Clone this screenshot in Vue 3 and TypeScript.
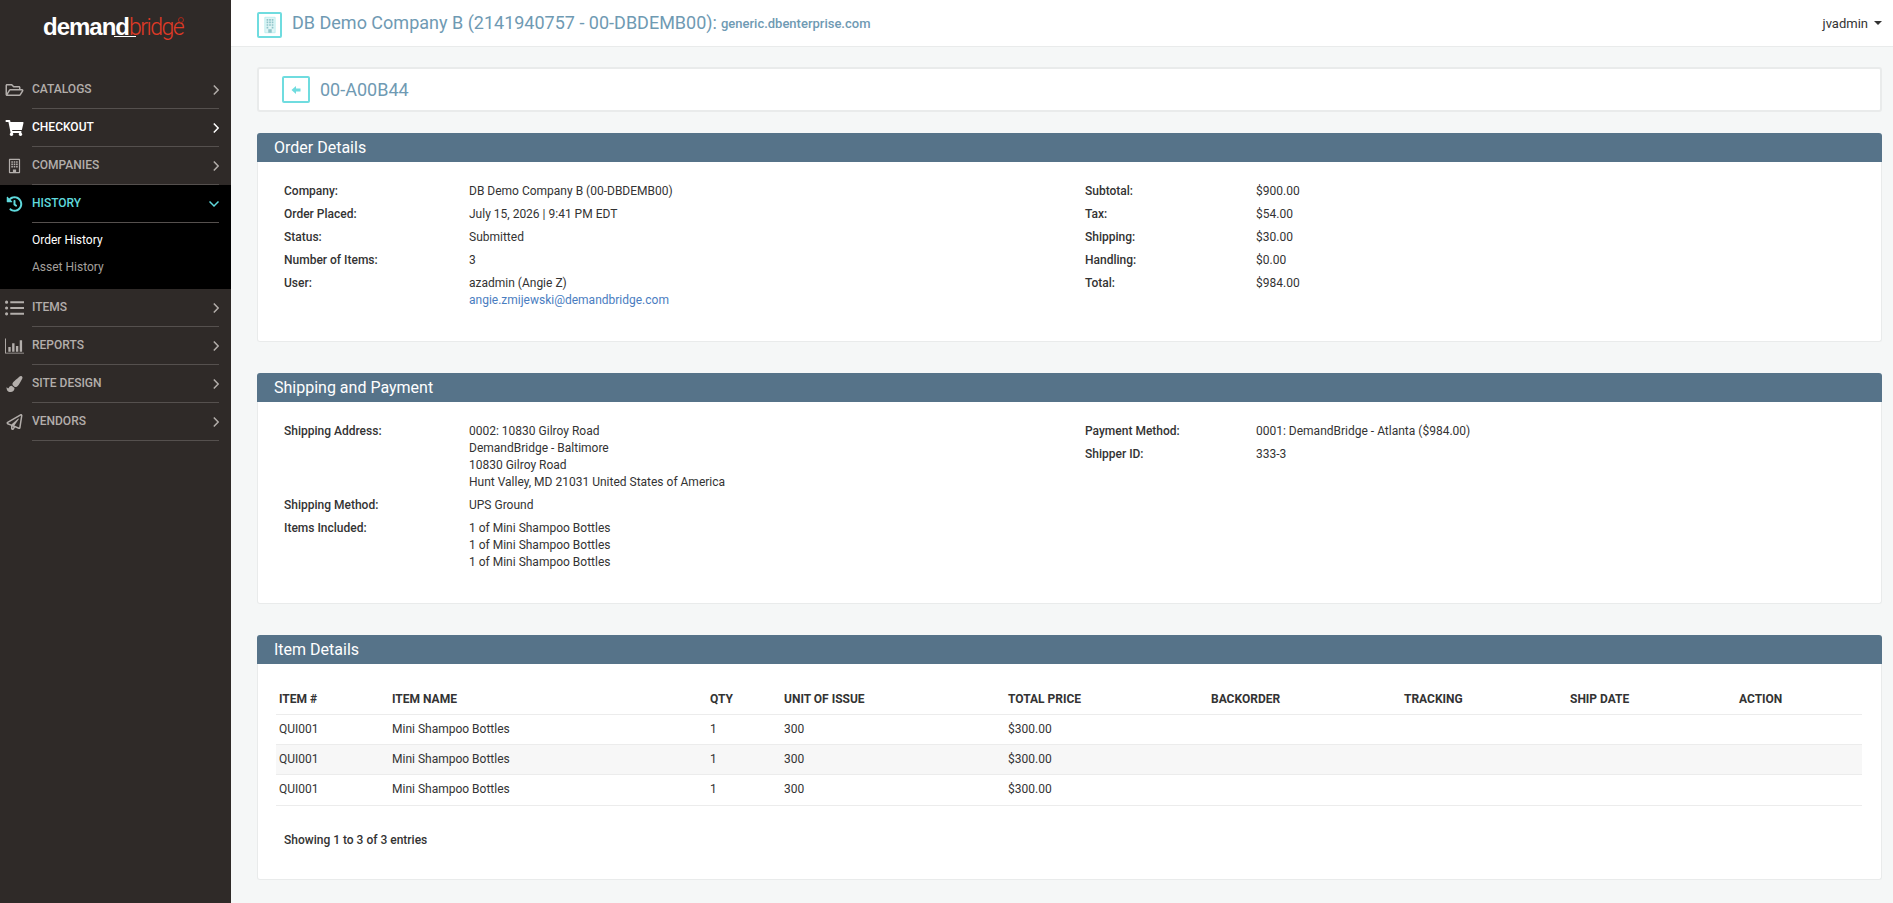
<template>
  <div class="layout">
    <aside class="sidebar">
      <div class="logo">
        <span class="logo-demand">demand</span><span class="logo-bridge">bridge</span><span class="logo-reg"></span>
      </div>
      <nav class="nav">
        <template v-for="item in navItems" :key="item.label">
          <div class="nav-group" :class="{ open: item.children }">
            <div class="nav-item" :class="{ white: item.white }">
              <svg class="nav-icon" :viewBox="item.box" fill="currentColor"><path :d="item.icon" /></svg>
              <div class="nav-row">
                <span>{{ item.label }}</span>
                <svg v-if="item.children" class="chevron-down" viewBox="0 0 10 12" fill="none" stroke="currentColor" stroke-width="1.5">
                  <path d="M0.5 3.5 L5 8 L9.500 3.500" />
                </svg>
                <svg v-else class="chevron-right" viewBox="0 0 6 12" fill="none" stroke="currentColor" stroke-width="1.5">
                  <path d="M0.800 1.500 L5.200 6 L0.800 10.500" />
                </svg>
              </div>
            </div>
            <div v-if="item.children" class="sub-items">
              <a v-for="(child, i) in item.children" :key="child" :class="{ current: i === 0 }">{{ child }}</a>
            </div>
          </div>
        </template>
      </nav>
    </aside>

    <div class="main">
      <header class="topbar">
        <span class="icon-box company-box">
          <svg viewBox="0 0 14 20" width="12" height="18">
            <path fill="#dff5f6" stroke="#b9ecee" d="M1 1h12v18H1z" />
            <path fill="#8fc4c9" d="M3 3h2v2H3zM6 3h2v2H6zM9 3h2v2H9zM3 6h2v2H3zM6 6h2v2H6zM9 6h2v2H9zM3 9h2v2H3zM6 9h2v2H6zM9 9h2v2H9zM3 12h2v2H3zM9 12h2v2H9zM5 15h4v4H5z" />
          </svg>
        </span>
        <h1>DB Demo Company B (2141940757 - 00-DBDEMB00):</h1>
        <span class="domain">generic.dbenterprise.com</span>
        <div class="user">jvadmin <i class="caret"></i></div>
      </header>

      <div class="content">
        <div class="crumb">
          <span class="icon-box back-box">
            <svg viewBox="0 0 10 10" width="10" height="10"><path fill="#6fdcdf" d="M0.5 5 L5 1 V3.4 H9.5 V6.6 H5 V9 Z" /></svg>
          </span>
          <span class="crumb-title">00-A00B44</span>
        </div>

        <section class="panel">
          <h2>Order Details</h2>
          <div class="panel-body info-grid">
            <dl v-for="(col, c) in orderColumns" :key="c" :class="c === 0 ? 'left' : 'right'">
              <template v-for="row in col" :key="row.label">
                <dt>{{ row.label }}</dt>
                <dd>
                  <div v-for="line in row.lines" :key="line">{{ line }}</div>
                  <a v-if="row.link">{{ row.link }}</a>
                </dd>
              </template>
            </dl>
          </div>
        </section>

        <section class="panel">
          <h2>Shipping and Payment</h2>
          <div class="panel-body info-grid">
            <dl v-for="(col, c) in shippingColumns" :key="c" :class="c === 0 ? 'left' : 'right'">
              <template v-for="row in col" :key="row.label">
                <dt>{{ row.label }}</dt>
                <dd>
                  <div v-for="(line, l) in row.lines" :key="l">{{ line }}</div>
                </dd>
              </template>
            </dl>
          </div>
        </section>

        <section class="panel last">
          <h2>Item Details</h2>
          <div class="panel-body table-body">
            <table>
              <thead>
                <tr>
                  <th v-for="h in headers" :key="h">{{ h }}</th>
                </tr>
              </thead>
              <tbody>
                <tr v-for="(row, i) in items" :key="i">
                  <td>{{ row.sku }}</td>
                  <td>{{ row.name }}</td>
                  <td>{{ row.qty }}</td>
                  <td>{{ row.unit }}</td>
                  <td>{{ row.price }}</td>
                  <td></td>
                  <td></td>
                  <td></td>
                  <td></td>
                </tr>
              </tbody>
            </table>
            <div class="table-info">Showing 1 to 3 of 3 entries</div>
          </div>
        </section>
      </div>
    </div>
  </div>
</template>

<script setup lang="ts">
interface NavItem {
  label: string;
  box: string;
  icon: string;
  white?: boolean;
  children?: string[];
}

interface InfoRow {
  label: string;
  lines: string[];
  link?: string;
}

const navItems: NavItem[] = [
  {
    label: 'CATALOGS',
    box: '0 0 576 512',
    icon: 'M527.9 224H480v-48c0-26.5-21.5-48-48-48H272l-64-64H48C21.5 64 0 85.5 0 112v288c0 26.5 21.5 48 48 48h400c16.5 0 31.9-8.5 40.7-22.6l79.9-128c20-31.9-3-73.4-40.7-73.4zM48 118c0-3.3 2.7-6 6-6h134.1l64 64H426c3.3 0 6 2.7 6 6v42H152c-16.8 0-32.4 8.8-41.1 23.2L48 351.4zm400 282H72l77.2-128H528z',
  },
  {
    label: 'CHECKOUT',
    white: true,
    box: '0 0 576 512',
    icon: 'M528.12 301.319l47.273-208C578.806 78.301 567.391 64 551.99 64H159.208l-9.166-44.81C147.758 8.021 137.93 0 126.529 0H24C10.745 0 0 10.745 0 24v16c0 13.255 10.745 24 24 24h69.883l70.248 343.435C147.325 417.1 136 435.222 136 456c0 30.928 25.072 56 56 56s56-25.072 56-56c0-15.674-6.447-29.835-16.824-40h209.647C430.447 426.165 424 440.326 424 456c0 30.928 25.072 56 56 56s56-25.072 56-56c0-22.172-12.888-41.332-31.579-50.405l5.517-24.276c3.413-15.018-8.002-29.319-23.403-29.319H218.117l-6.545-32h293.145c11.206 0 20.92-7.754 23.403-18.681z',
  },
  {
    label: 'COMPANIES',
    box: '0 0 18 20',
    icon: 'M3 1h12c.6 0 1 .4 1 1v16c0 .6-.4 1-1 1H3c-.6 0-1-.4-1-1V2c0-.6.4-1 1-1zm.5 1.5v15h3.5v-3h4v3h3.500v-15zM5 4h2v2H5zM8 4h2v2H8zM11 4h2v2h-2zM5 7h2v2H5zM8 7h2v2H8zM11 7h2v2h-2zM5 10h2v2H5zM8 10h2v2H8zM11 10h2v2h-2z',
  },
  {
    label: 'HISTORY',
    box: '0 0 512 512',
    icon: 'M504 255.531c.253 136.64-111.18 248.372-247.82 248.468-59.015.042-113.223-20.53-155.822-54.911-11.077-8.94-11.905-25.541-1.839-35.607l11.267-11.267c8.609-8.609 22.353-9.551 31.891-1.984C173.062 425.135 212.781 440 256 440c101.705 0 184-82.311 184-184 0-101.705-82.311-184-184-184-48.814 0-93.149 18.969-126.068 49.932l50.754 50.754c10.08 10.08 2.941 27.314-11.313 27.314H24c-8.837 0-16-7.163-16-16V38.627c0-14.254 17.234-21.393 27.314-11.314l49.372 49.372C129.209 34.136 189.552 8 256 8c136.81 0 247.747 110.78 248 247.531zm-180.912 78.784l9.823-12.63c8.138-10.463 6.253-25.542-4.21-33.679L288 256.349V152c0-13.255-10.745-24-24-24h-16c-13.255 0-24 10.745-24 24v135.651l65.409 50.874c10.463 8.137 25.541 6.253 33.679-4.21z',
    children: ['Order History', 'Asset History'],
  },
  {
    label: 'ITEMS',
    box: '0 0 18 14',
    icon: 'M1.500 0a1.500 1.500 0 1 1 0 3 1.500 1.500 0 0 1 0-3zM1.500 5.500a1.500 1.500 0 1 1 0 3 1.500 1.500 0 0 1 0-3zM1.500 11a1.500 1.500 0 1 1 0 3 1.500 1.500 0 0 1 0-3zM5 .5h13v2H5zM5 6h13v2H5zM5 11.500h13v2H5z',
  },
  {
    label: 'REPORTS',
    box: '0 0 20 16',
    icon: 'M0 0h1v15h19v1H0zM3.500 9H6v5H3.500zM7.500 5H10v9H7.500zM11.500 8H14v6h-2.500zM15.500 2H18v12h-2.500z',
  },
  {
    label: 'SITE DESIGN',
    box: '0 0 512 512',
    icon: 'M167.02 309.34c-40.12 2.58-76.53 17.86-97.19 72.3-2.35 6.21-8 9.98-14.59 9.98-11.11 0-45.46-27.67-55.25-34.35C0 439.62 37.93 512 128 512c75.86 0 128-43.77 128-120.19 0-3.11-.65-6.08-.97-9.13l-88.01-73.34zM457.89 0c-15.16 0-29.37 6.71-40.21 16.45C213.27 199.05 192 203.34 192 257.09c0 13.7 3.25 26.76 8.73 38.7l63.82 53.18c7.21 1.8 14.64 3.03 22.39 3.03 62.11 0 98.11-45.47 211.16-256.46 7.38-14.35 13.9-29.85 13.9-45.99C512 20.64 486 0 457.89 0z',
  },
  {
    label: 'VENDORS',
    box: '0 0 512 512',
    icon: 'M440 6.5L24 246.4c-34.4 19.9-31.1 70.8 5.7 85.9L144 379.6V464c0 46.4 59.2 65.5 86.6 28.6l43.8-59.1 111.9 46.2c5.9 2.4 12.1 3.6 18.3 3.6 8.2 0 16.3-2.1 23.6-6.2 12.8-7.2 21.6-20 23.9-34.5l59.4-387.2c6.1-40.1-36.9-68.8-71.5-48.9zM192 464v-64.6l36.6 15.1L192 464zm212.6-28.7l-153.8-63.5L391 169.5c10.7-15.5-9.5-33.5-23.7-21.2L155.8 332.6 48 288 464 48l-59.4 387.3z',
  },
];

const orderColumns: InfoRow[][] = [
  [
    { label: 'Company:', lines: ['DB Demo Company B (00-DBDEMB00)'] },
    { label: 'Order Placed:', lines: ['July 15, 2026 | 9:41 PM EDT'] },
    { label: 'Status:', lines: ['Submitted'] },
    { label: 'Number of Items:', lines: ['3'] },
    { label: 'User:', lines: ['azadmin (Angie Z)'], link: 'angie.zmijewski@demandbridge.com' },
  ],
  [
    { label: 'Subtotal:', lines: ['$900.00'] },
    { label: 'Tax:', lines: ['$54.00'] },
    { label: 'Shipping:', lines: ['$30.00'] },
    { label: 'Handling:', lines: ['$0.00'] },
    { label: 'Total:', lines: ['$984.00'] },
  ],
];

const shippingColumns: InfoRow[][] = [
  [
    {
      label: 'Shipping Address:',
      lines: ['0002: 10830 Gilroy Road', 'DemandBridge - Baltimore', '10830 Gilroy Road', 'Hunt Valley, MD 21031 United States of America'],
    },
    { label: 'Shipping Method:', lines: ['UPS Ground'] },
    { label: 'Items Included:', lines: ['1 of Mini Shampoo Bottles', '1 of Mini Shampoo Bottles', '1 of Mini Shampoo Bottles'] },
  ],
  [
    { label: 'Payment Method:', lines: ['0001: DemandBridge - Atlanta ($984.00)'] },
    { label: 'Shipper ID:', lines: ['333-3'] },
  ],
];

const headers = ['ITEM #', 'ITEM NAME', 'QTY', 'UNIT OF ISSUE', 'TOTAL PRICE', 'BACKORDER', 'TRACKING', 'SHIP DATE', 'ACTION'];

const items = [1, 2, 3].map(() => ({
  sku: 'QUI001',
  name: 'Mini Shampoo Bottles',
  qty: 1,
  unit: 300,
  price: '$300.00',
}));
</script>

<style>
html,
body {
  margin: 0;
  background: #f5f7f7;
}
</style>

<style scoped>
.layout {
  display: flex;
  min-height: 903px;
  font-family: Roboto, "Liberation Sans", sans-serif;
  font-size: 12px;
  line-height: 17px;
  color: #333;
}

.sidebar {
  width: 231px;
  flex: none;
  background: #2f2a28;
}

.logo {
  height: 71px;
  padding: 13px 0 0 43px;
  box-sizing: border-box;
  display: flex;
  align-items: baseline;
  font-family: "Liberation Sans", sans-serif;
  font-size: 24px;
  line-height: 28px;
  letter-spacing: -1px;
  position: relative;
}

.logo-demand {
  color: #fff;
  font-weight: 700;
}

.logo-bridge {
  color: #e03a26;
  font-family: Roboto, sans-serif;
  font-size: 23px;
  font-weight: 300;
  letter-spacing: -1.5px;
}

.logo-demand::after {
  content: "";
  position: absolute;
  left: 114px;
  top: 36px;
  width: 22px;
  height: 1px;
  background: #fff;
}

.logo-reg {
  position: absolute;
  left: 178px;
  top: 17px;
  width: 4px;
  height: 4px;
  border: 1px solid #a8291c;
  border-radius: 50%;
}

.nav-group.open {
  background: #000;
}

.nav-item {
  display: flex;
  height: 38px;
  color: #b3aeab;
  font-weight: 500;
}

.nav-item.white {
  color: #fff;
}

.open .nav-item {
  color: #5fd9dc;
}

.nav-icon {
  width: 19px;
  height: 16px;
  margin: 11px 8px 0 5px;
  flex: none;
}

.nav-row {
  flex: none;
  width: 187px;
  display: flex;
  align-items: center;
  justify-content: space-between;
  border-bottom: 1px solid #55504e;
  box-sizing: border-box;
}

.chevron-right {
  width: 6px;
  height: 12px;
}

.chevron-down {
  width: 10px;
  height: 12px;
}

.sub-items {
  display: flex;
  flex-direction: column;
  padding: 9px 0 13px 32px;
  gap: 10px;
}

.sub-items a {
  color: #a5a09e;
}

.sub-items a.current {
  color: #fff;
}

.main {
  flex: 1;
  min-width: 0;
}

.topbar {
  height: 46px;
  display: flex;
  align-items: center;
  background: #fff;
  border-bottom: 1px solid #e9ebeb;
  padding: 0 11px 0 26px;
}

.icon-box {
  display: flex;
  align-items: center;
  justify-content: center;
  border: 2px solid #6fdcdf;
  border-radius: 2px;
  box-sizing: border-box;
  flex: none;
}

.company-box {
  width: 25px;
  height: 26px;
  margin: 4px 10px 0 0;
}

.topbar h1 {
  margin: 0;
  font-size: 18px;
  line-height: 24px;
  font-weight: 400;
  color: #6f9ab3;
}

.domain {
  margin-left: 4px;
  font-size: 13px;
  font-weight: 500;
  color: #6f9ab3;
}

.user {
  margin-left: auto;
  color: #333;
  font-size: 13px;
  display: flex;
  align-items: center;
  gap: 6px;
}

.caret {
  border-top: 4px solid #333;
  border-left: 4px solid transparent;
  border-right: 4px solid transparent;
}

.content {
  padding: 20px 11px 0 26px;
}

.crumb {
  height: 45px;
  display: flex;
  align-items: center;
  padding-left: 23px;
  background: #fff;
  border: 2px solid #e9ebeb;
  border-radius: 3px;
  box-sizing: border-box;
  margin-bottom: 21px;
}

.back-box {
  width: 28px;
  height: 27px;
  margin-right: 10px;
}

.crumb-title {
  font-size: 18px;
  color: #6f9ab3;
}

.panel {
  margin-bottom: 31px;
}

.panel.last {
  margin-bottom: 0;
}

.panel h2 {
  margin: 0;
  height: 29px;
  padding-left: 17px;
  background: #567389;
  border-radius: 3px 3px 0 0;
  color: #fff;
  font-size: 16px;
  line-height: 29px;
  font-weight: 400;
}

.panel-body {
  background: #fff;
  border: 1px solid #e9ebeb;
  border-top: none;
  border-radius: 0 0 3px 3px;
}

.info-grid {
  display: grid;
  grid-template-columns: 801px 1fr;
  padding: 21px 26px 32px;
}

dl {
  margin: 0;
  display: grid;
  row-gap: 6px;
  align-content: start;
}

dl.left {
  grid-template-columns: 185px 1fr;
}

dl.right {
  grid-template-columns: 171px 1fr;
}

dt {
  font-weight: 500;
}

dd {
  margin: 0;
}

dd a {
  color: #4a7dbf;
}

.table-body {
  padding: 21px 19px 30px 18px;
}

table {
  width: 100%;
  border-collapse: collapse;
  table-layout: fixed;
}

th,
td {
  padding: 0 0 0 3px;
  text-align: left;
  box-sizing: border-box;
}

th {
  height: 29px;
  font-weight: 700;
  border-bottom: 1px solid #ececec;
}

td {
  height: 30.4px;
  border-bottom: 1px solid #ececec;
}

tbody tr:nth-child(2) td {
  background: #f7f7f7;
}

th:nth-child(1) { width: 113px; }
th:nth-child(2) { width: 318px; }
th:nth-child(3) { width: 74px; }
th:nth-child(4) { width: 224px; }
th:nth-child(5) { width: 203px; }
th:nth-child(6) { width: 193px; }
th:nth-child(7) { width: 166px; }
th:nth-child(8) { width: 169px; }

.table-info {
  margin: 26px 0 0 8px;
  font-weight: 500;
}
</style>
